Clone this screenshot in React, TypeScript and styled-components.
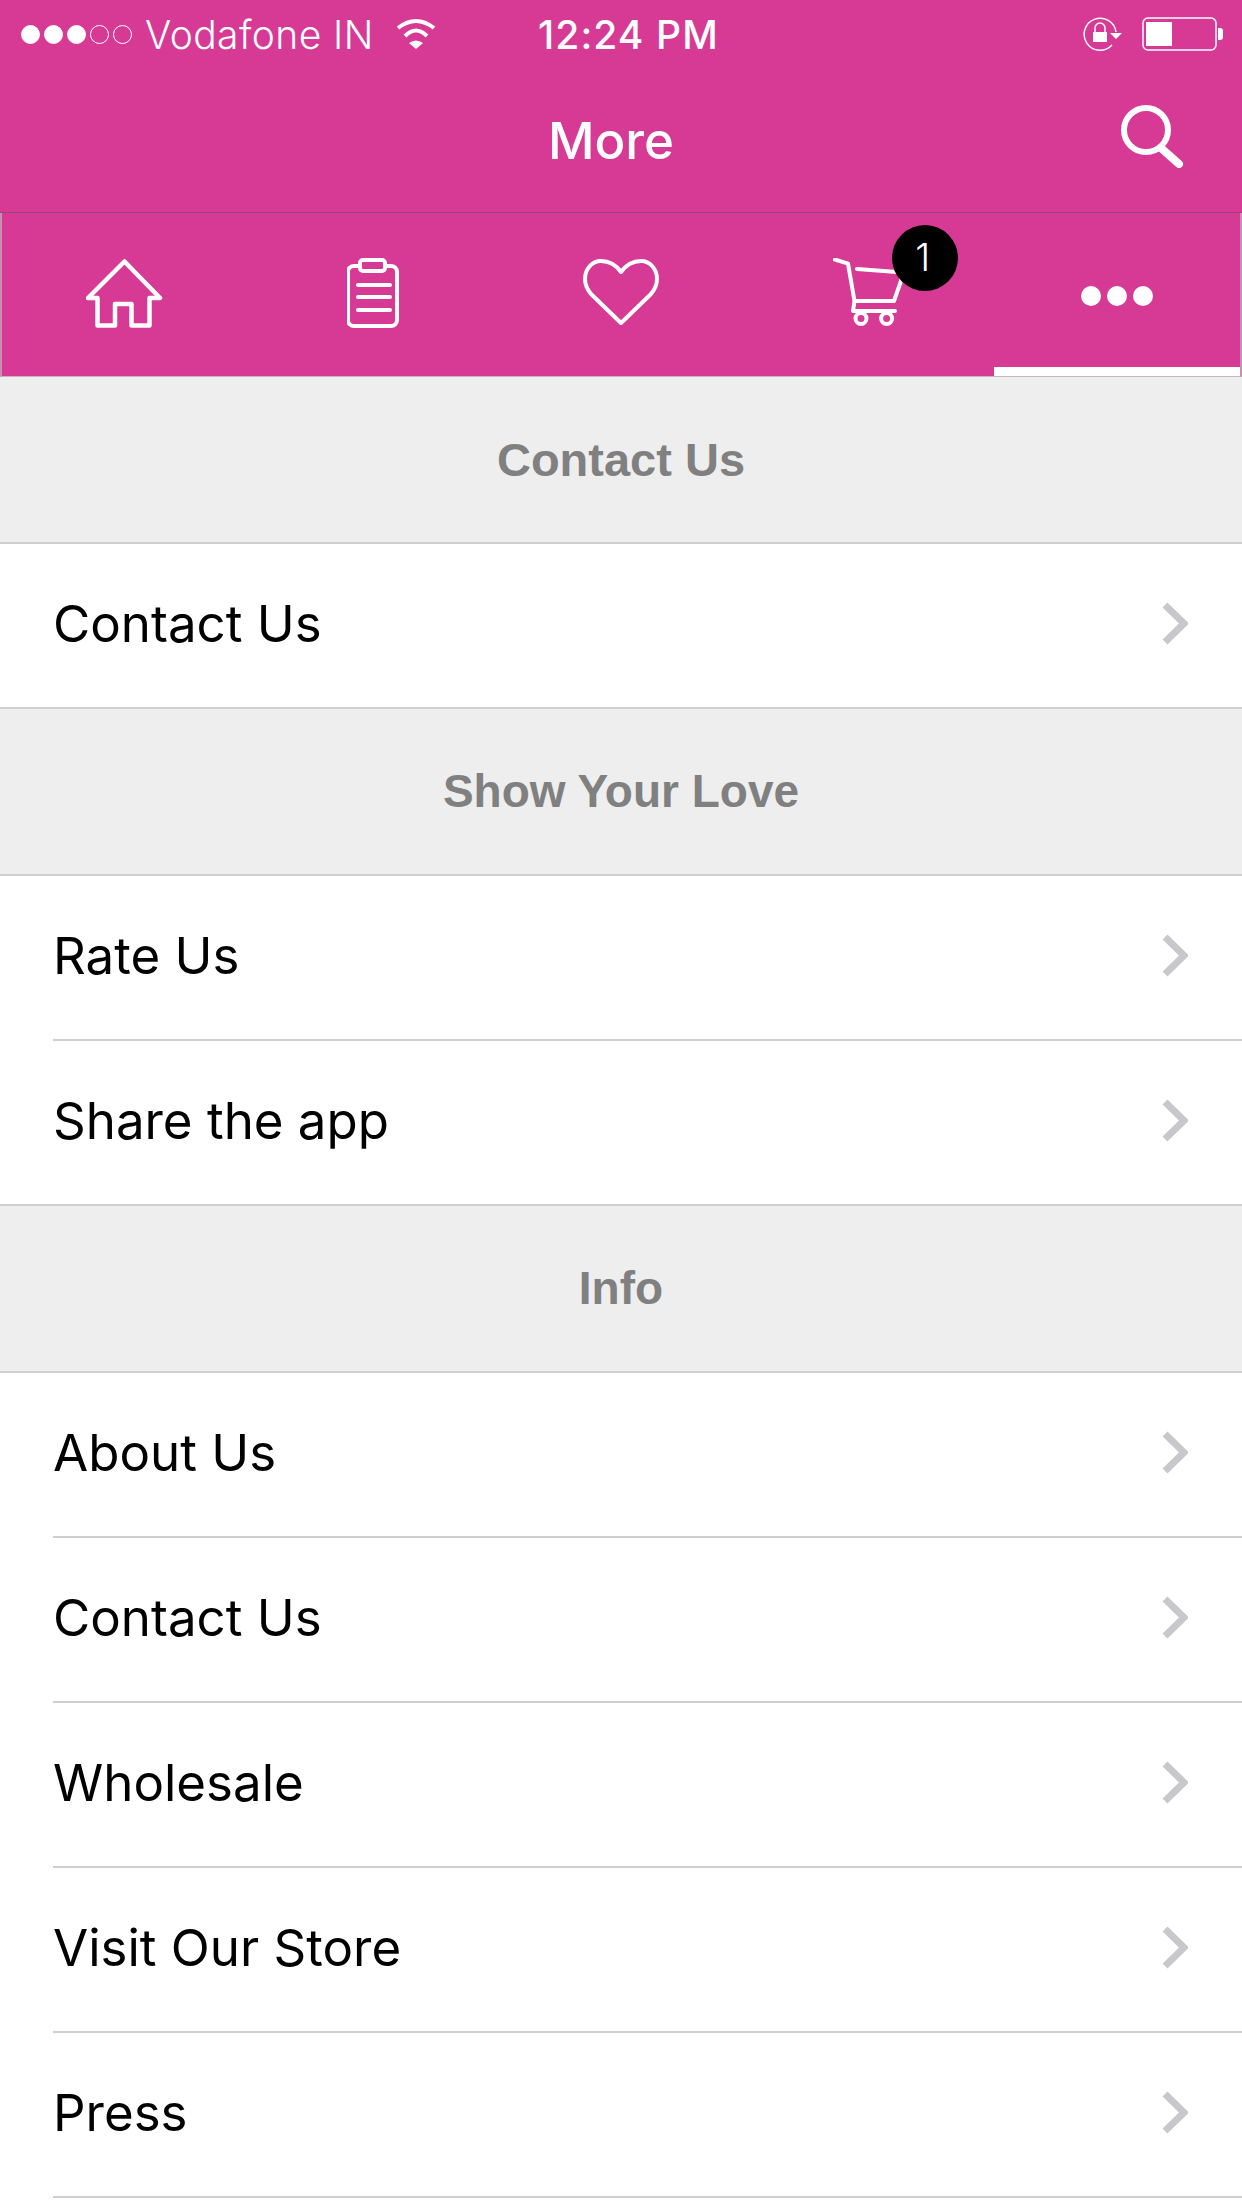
import React from 'react';
import styled, { createGlobalStyle } from 'styled-components';

const PINK = '#d63a94';
const HAIRLINE = '#cfcfd2';

const GlobalStyle = createGlobalStyle`
  html, body {
    margin: 0;
    padding: 0;
    background: #fff;
  }
  * {
    box-sizing: border-box;
  }
`;

const Screen = styled.div`
  width: 1242px;
  height: 2208px;
  overflow: hidden;
  background: #fff;
  font-family: Inter, 'Liberation Sans', sans-serif;
`;

const Header = styled.header`
  height: 213px;
  background: ${PINK};
  border-bottom: 1px solid #8c4a78;
  color: #fff;
`;

const StatusBar = styled.div`
  height: 68px;
  display: flex;
  align-items: center;
`;

const StatusLeft = styled.div`
  width: 538px;
  flex: none;
  display: flex;
  align-items: center;
  padding-left: 21px;
`;

const Signal = styled.span<{ $filled: boolean }>`
  width: 19px;
  height: 19px;
  margin-right: 4px;
  border-radius: 50%;
  border: 1.5px solid #fff;
  background: ${(p) => (p.$filled ? '#fff' : 'transparent')};
`;

const Carrier = styled.span`
  margin-left: 9px;
  margin-right: 22px;
  font-size: 39px;
  font-weight: 300;
  letter-spacing: 0.4px;
  line-height: 1;
`;

const Clock = styled.span`
  font-size: 39px;
  font-weight: 500;
  letter-spacing: 1.1px;
  line-height: 1;
`;

const StatusRight = styled.div`
  margin-left: auto;
  padding-right: 18px;
  display: flex;
  align-items: center;
  gap: 20px;
`;

const NavBar = styled.div`
  height: 144px;
  display: grid;
  grid-template-columns: 1fr auto 1fr;
  align-items: center;
  padding-right: 20px;
`;

const Title = styled.h1`
  grid-column: 2;
  margin: 0;
  font-size: 51px;
  font-weight: 500;
  line-height: 1;
`;

const SearchButton = styled.div`
  justify-self: end;
  display: flex;
  margin: 0 37px 8px 0;
`;

const Tabs = styled.nav`
  height: 164px;
  display: grid;
  grid-template-columns: repeat(5, 1fr);
  background: ${PINK};
  border-left: 2px solid #c98fb3;
  border-right: 2px solid #c98fb3;
  border-bottom: 1px solid #c9b5c2;
`;

const Tab = styled.div<{ $active?: boolean }>`
  position: relative;
  display: flex;
  align-items: center;
  justify-content: center;
  padding-top: 5px;
  margin-left: ${(p) => (p.$active ? '2px' : '0')};
  border-bottom: 9px solid ${(p) => (p.$active ? '#fff' : 'transparent')};
`;

const CartBadge = styled.span`
  position: absolute;
  top: 12px;
  left: 147px;
  width: 66px;
  height: 66px;
  padding: 0 4px 2px 0;
  border-radius: 50%;
  background: #000;
  color: #fff;
  display: flex;
  align-items: center;
  justify-content: center;
  font-size: 38px;
  font-weight: 300;
`;

const MoreDots = styled.div`
  display: flex;
  gap: 6px;
  margin-top: 6px;
`;

const MoreDot = styled.span`
  width: 20px;
  height: 20px;
  border-radius: 50%;
  background: #fff;
`;

const SectionHeader = styled.div<{ $large?: boolean }>`
  height: 167px;
  display: flex;
  align-items: center;
  justify-content: center;
  padding-bottom: 1px;
  background: #eee;
  border-bottom: 2px solid ${HAIRLINE};
  color: #808080;
  font-family: 'Liberation Sans', Arial, sans-serif;
  font-weight: 700;
  font-size: ${(p) => (p.$large ? '47px' : '46px')};
`;

const Row = styled.div<{ $last?: boolean }>`
  height: 165px;
  display: flex;
  align-items: center;
  justify-content: space-between;
  margin-left: ${(p) => (p.$last ? '0' : '53px')};
  padding: 0 54px 4px ${(p) => (p.$last ? '53px' : '0')};
  border-bottom: 2px solid ${HAIRLINE};
  color: #000;
  font-size: 51px;
  font-weight: 400;
`;

const sections = [
  { title: 'Contact Us', large: true, rows: ['Contact Us'] },
  { title: 'Show Your Love', rows: ['Rate Us', 'Share the app'] },
  { title: 'Info', open: true, rows: ['About Us', 'Contact Us', 'Wholesale', 'Visit Our Store', 'Press'] },
];

const WifiIcon = () => (
  <svg width="40" height="32" viewBox="0 0 40 32" fill="none">
    <path d="M2 10Q20-4 38 10" stroke="#fff" strokeWidth="4" />
    <path d="M9 18Q20 7 31 18" stroke="#fff" strokeWidth="4" />
    <path d="M13 25Q20 20 27 25L20 31Z" fill="#fff" />
  </svg>
);

const RotationLockIcon = () => (
  <svg width="39" height="34" viewBox="0 0 39 34" fill="none">
    <path d="M33 15A16 16 0 1 0 29 28" stroke="#fff" strokeWidth="1.5" />
    <path d="M27 16H39L33 22Z" fill="#fff" />
    <rect x="10" y="15" width="14" height="10" fill="#fff" />
    <path d="M12 15V11a5 5 0 0 1 10 0V15" stroke="#fff" strokeWidth="1.5" />
  </svg>
);

const BatteryIcon = () => (
  <svg width="82" height="34" viewBox="0 0 82 34" fill="none">
    <rect x="1" y="1" width="73" height="32" rx="5" stroke="#fff" strokeWidth="1.5" />
    <rect x="4" y="5" width="26" height="24" fill="#fff" />
    <path d="M76 11h2a3 3 0 0 1 3 3v6a3 3 0 0 1-3 3h-2Z" fill="#fff" />
  </svg>
);

const SearchIcon = () => (
  <svg width="64" height="63" viewBox="0 0 64 63" fill="none" stroke="#fff" strokeLinecap="round">
    <circle cx="25" cy="25" r="22" strokeWidth="6" />
    <path d="M40 43L58 59" strokeWidth="8" />
  </svg>
);

const HomeIcon = () => (
  <svg width="80" height="70" viewBox="2.5 0 80 70" fill="none" stroke="#fff" strokeWidth="4.5" strokeLinejoin="round">
    <path d="M41 3.5L76.5 40H66V67.5H48V46H31.5V67.5H14V40H4.5Z" />
  </svg>
);

const ClipboardIcon = () => (
  <svg width="53" height="70" viewBox="1 0 53 70" fill="none" stroke="#fff" strokeWidth="4" strokeLinecap="round">
    <path d="M14 8H8a6 6 0 0 0-6 6V62a6 6 0 0 0 6 6H45a6 6 0 0 0 6-6V14a6 6 0 0 0-6-6H39" />
    <rect x="14" y="2" width="25" height="11" rx="3" />
    <path d="M12 27H44M12 39H44M12 52H44" />
  </svg>
);

const HeartIcon = () => (
  <svg width="76" height="67" viewBox="0 0 76 67" fill="none" stroke="#fff" strokeWidth="4" strokeLinejoin="round">
    <path d="M38 64L8 35C3 29 2 24 2 20C2 10 9 2 18 2C26 2 33 6 38 13C43 6 50 2 58 2C67 2 74 10 74 20C74 24 73 29 68 35Z" />
  </svg>
);

const CartIcon = () => (
  <svg width="72" height="70" viewBox="0 0 72 70" fill="none" stroke="#fff" strokeWidth="4" strokeLinecap="round" strokeLinejoin="round">
    <path d="M2 1.5L15 5.7L21.5 43H61L69 20" />
    <path d="M24 11L64 14" />
    <path d="M21.5 43L20 53H62" />
    <circle cx="28" cy="60.5" r="5.5" />
    <circle cx="53.6" cy="60.5" r="5.5" />
  </svg>
);

const Chevron = () => (
  <svg width="26" height="43" viewBox="0 0 26 43" fill="none" stroke="#c8c7cc" strokeWidth="7">
    <path d="M3 3L22 21.5L3 40" />
  </svg>
);

export default function App() {
  return (
    <Screen>
      <GlobalStyle />
      <Header>
        <StatusBar>
          <StatusLeft>
            {[true, true, true, false, false].map((filled, index) => (
              <Signal key={`signal-${index}`} $filled={filled} />
            ))}
            <Carrier>Vodafone IN</Carrier>
            <WifiIcon />
          </StatusLeft>
          <Clock>12:24 PM</Clock>
          <StatusRight>
            <RotationLockIcon />
            <BatteryIcon />
          </StatusRight>
        </StatusBar>
        <NavBar>
          <Title>More</Title>
          <SearchButton>
            <SearchIcon />
          </SearchButton>
        </NavBar>
      </Header>
      <Tabs>
        <Tab>
          <HomeIcon />
        </Tab>
        <Tab>
          <ClipboardIcon />
        </Tab>
        <Tab>
          <HeartIcon />
        </Tab>
        <Tab>
          <CartIcon />
          <CartBadge>1</CartBadge>
        </Tab>
        <Tab $active>
          <MoreDots>
            <MoreDot />
            <MoreDot />
            <MoreDot />
          </MoreDots>
        </Tab>
      </Tabs>
      {sections.map((section) => (
        <section key={section.title}>
          <SectionHeader $large={section.large}>{section.title}</SectionHeader>
          {section.rows.map((label, index) => (
            <Row key={label} $last={!section.open && index === section.rows.length - 1}>
              {label}
              <Chevron />
            </Row>
          ))}
        </section>
      ))}
    </Screen>
  );
}
